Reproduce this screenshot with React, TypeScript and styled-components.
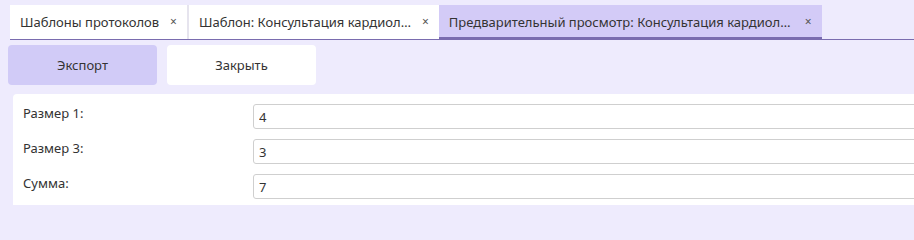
import { Fragment } from 'react';
import { createGlobalStyle, styled } from 'styled-components';

const GlobalStyle = createGlobalStyle`
    html, body {
        margin: 0;
        padding: 0;
        background: #eeebfd;
        overflow: hidden;
    }
    body {
        font-family: "Noto Sans", "Open Sans", sans-serif;
        font-size: 13px;
        color: #333;
    }
`;

const Page = styled.div`
    width: 960px;
    height: 205px;
    padding-top: 5px;
    box-sizing: border-box;
    overflow: hidden;
`;

const TabBar = styled.div`
    display: flex;
    margin-left: 10px;
    height: 35px;
    border-bottom: 1px solid #7a6caf;
    box-sizing: border-box;
`;

const Tab = styled.div<{ $active?: boolean }>`
    display: flex;
    align-items: center;
    gap: 11px;
    height: 34px;
    padding: 0 10px;
    box-sizing: border-box;
    background: ${(p) => (p.$active ? '#d3cbf7' : '#ffffff')};
    box-shadow: ${(p) => (p.$active ? 'inset 0 -2px 0 #7a6caf' : 'none')};
    white-space: nowrap;
`;

const TabTitle = styled.span<{ $max?: number }>`
    max-width: ${(p) => (p.$max ? p.$max + 'px' : 'none')};
    overflow: hidden;
    text-overflow: ellipsis;
`;

const TabClose = styled.span`
    font-size: 12px;
    color: #555;
    line-height: 1;
`;

const TabSeparator = styled.div`
    width: 2px;
    height: 34px;
    background: #e6e4ee;
`;

const Toolbar = styled.div`
    display: flex;
    gap: 10px;
    margin: 5px 0 0 8px;
`;

const Button = styled.button<{ $primary?: boolean }>`
    width: 149px;
    height: 40px;
    border: none;
    border-radius: 4px;
    background: ${(p) => (p.$primary ? '#d1cbf7' : '#ffffff')};
    font-family: inherit;
    font-size: 13px;
    color: #333;
    cursor: pointer;
`;

const Panel = styled.div`
    margin: 9px 0 0 13px;
    padding: 10px 0 20px 10px;
    background: #ffffff;
    border-radius: 4px;
    display: grid;
    grid-template-columns: 230px 1fr;
    row-gap: 10px;
`;

const Label = styled.div`
    line-height: 18px;
`;

const Field = styled.input`
    height: 25px;
    box-sizing: border-box;
    border: 1px solid #cfcfcf;
    border-radius: 3px;
    padding: 0 5px;
    font-family: inherit;
    font-size: 13px;
    color: #333;
    outline: none;
`;

const fields = [
    { label: 'Размер 1:', value: '4' },
    { label: 'Размер 3:', value: '3' },
    { label: 'Сумма:', value: '7' },
];

export default function App() {
    return (
        <Page>
            <GlobalStyle />
            <TabBar>
                <Tab>
                    <TabTitle>Шаблоны протоколов</TabTitle>
                    <TabClose>×</TabClose>
                </Tab>
                <TabSeparator />
                <Tab>
                    <TabTitle $max={212}>Шаблон: Консультация кардиолога</TabTitle>
                    <TabClose>×</TabClose>
                </Tab>
                <Tab $active>
                    <TabTitle $max={345}>Предварительный просмотр: Консультация кардиолога</TabTitle>
                    <TabClose>×</TabClose>
                </Tab>
            </TabBar>
            <Toolbar>
                <Button $primary>Экспорт</Button>
                <Button>Закрыть</Button>
            </Toolbar>
            <Panel>
                {fields.map((f) => (
                    <Fragment key={f.label}>
                        <Label>{f.label}</Label>
                        <Field defaultValue={f.value} readOnly />
                    </Fragment>
                ))}
            </Panel>
        </Page>
    );
}
